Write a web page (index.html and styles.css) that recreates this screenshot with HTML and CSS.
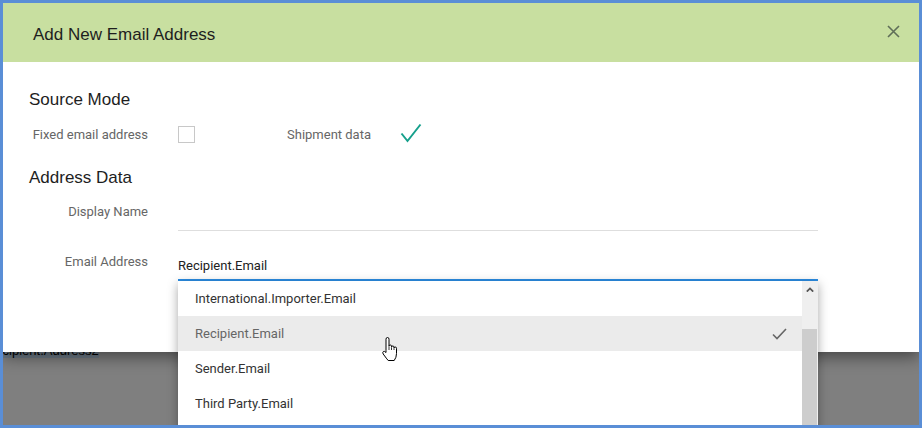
FILE: index.html
```html
<!DOCTYPE html>
<html>
<head>
<meta charset="utf-8">
<link rel="stylesheet" href="styles.css">
</head>
<body>
<div class="frame">
  <div class="page">
    <div class="page-line"><span class="sel">Recipient.Address2</span></div>
  </div>
  <div class="dialog">
    <div class="dialog-header">
      <h1 class="title">Add New Email Address</h1>
      <span class="close"><svg width="13" height="13" viewBox="0 0 13 13"><path d="M1 1L12 12M12 1L1 12" stroke="#5f6e58" stroke-width="1.6" fill="none"/></svg></span>
    </div>
    <div class="dialog-body">
      <h2 class="section">Source Mode</h2>
      <div class="mode-row">
        <span class="label">Fixed email address</span>
        <span class="checkbox"></span>
        <span class="label label-second">Shipment data</span>
        <svg class="teal-check" width="22" height="20" viewBox="0 0 22 20"><path d="M1.5 10.5L7.5 18L20.5 1.5" stroke="#16a08c" stroke-width="2" fill="none"/></svg>
      </div>
      <h2 class="section section-second">Address Data</h2>
      <div class="field-row">
        <span class="field-label">Display Name</span>
        <div class="field"></div>
      </div>
      <div class="field-row field-row-email">
        <span class="field-label">Email Address</span>
        <div class="field focused">Recipient.Email
          <div class="dropdown">
            <div class="dd-list">
              <div class="dd-item">International.Importer.Email</div>
              <div class="dd-item active">Recipient.Email<svg width="15" height="12" viewBox="0 0 15 12"><path d="M1 6.5L5 10.5L14 1" stroke="#666" stroke-width="1.6" fill="none"/></svg></div>
              <div class="dd-item">Sender.Email</div>
              <div class="dd-item">Third Party.Email</div>
            </div>
            <div class="dd-scroll">
              <div class="sb-up"><svg width="8" height="5" viewBox="0 0 8 5"><path d="M0.8 4.6L4 1.4L7.2 4.6" stroke="#555" stroke-width="1.8" fill="none"/></svg></div>
              <div class="sb-thumb"></div>
            </div>
          </div>
        </div>
      </div>
    </div>
  </div>
  <svg class="cursor" width="20" height="27" viewBox="0 0 20 27"><path d="M6 14.5V3.2Q6 1.5 7.5 1.5Q9 1.5 9 3.2V10.2Q9 9 10.3 9Q11.5 9 11.5 10.2V11.2Q11.5 10 12.8 10Q14 10 14 11.2V12.2Q14 11 15.2 11Q16.5 11 16.5 12.3V17.5Q16.5 21.5 14.2 24.5H8.2Q6.8 23 3.2 18Q2.2 16.4 3.3 15.6Q4.5 14.8 6 16.5Z" fill="#fff" stroke="#000" stroke-width="1" stroke-linejoin="round"/><path d="M9 10.5V14M11.5 11.5V14M14 12.5V14" stroke="#000" stroke-width="0.8"/></svg>
</div>
</body>
</html>
```

FILE: styles.css
```css
body {
  margin: 0;
}

.frame {
  width: 922px;
  height: 428px;
  box-sizing: border-box;
  border: 3px solid #5a8ed6;
  background: #7f7f7f;
  position: relative;
  overflow: hidden;
}

.page {
  padding-top: 340px;
}

.page-line {
  margin-left: -17px;
  font: 13px/16px "Liberation Sans", Arial, sans-serif;
  color: #000;
}

.sel {
  background: #6d7a86;
}

.dialog {
  position: absolute;
  top: 0;
  left: 0;
  width: 916px;
  height: 349px;
  background: #fff;
  box-shadow: 0 5px 15px rgba(0, 0, 0, 0.45);
}

.dialog-header {
  height: 59px;
  box-sizing: border-box;
  background: #c8dfa0;
  display: flex;
  align-items: flex-start;
  padding-left: 30px;
}

.title {
  margin: 0;
  padding-top: 22px;
  font: normal 17px/20px "Liberation Sans", Arial, sans-serif;
  color: #1e1e1e;
}

.close {
  margin-left: auto;
  margin-top: 22px;
  margin-right: 19px;
}

.close svg {
  display: block;
}

.dialog-body {
  padding: 28px 0 0 26px;
}

.section {
  margin: 0;
  font: normal 17px/20px "Liberation Sans", Arial, sans-serif;
  color: #1e1e1e;
}

.section-second {
  margin-top: 25px;
}

.mode-row {
  display: flex;
  align-items: center;
  height: 17px;
  margin-top: 16px;
}

.label {
  width: 119px;
  flex: none;
  white-space: nowrap;
  text-align: right;
  font: 13px/17px Roboto, sans-serif;
  color: #666;
}

.checkbox {
  width: 17px;
  height: 17px;
  flex: none;
  box-sizing: border-box;
  border: 1px solid #c8c8c8;
  margin-left: 30px;
}

.label-second {
  width: 84px;
  text-align: left;
  margin-left: 92px;
}

.teal-check {
  flex: none;
  margin-left: 29px;
  margin-top: -4px;
}

.field-row {
  display: grid;
  grid-template-columns: 119px 640px;
  column-gap: 30px;
  margin-top: 10px;
}

.field-row-email {
  margin-top: 17px;
}

.field-label {
  text-align: right;
  white-space: nowrap;
  padding-top: 6px;
  font: 13px/16px Roboto, sans-serif;
  color: #666;
}

.field {
  height: 33px;
  box-sizing: border-box;
  border-bottom: 1px solid #dedede;
}

.field.focused {
  position: relative;
  border-bottom: 2px solid #2b8de3;
  padding-top: 10px;
  font: 13px/16px Roboto, sans-serif;
  color: #222;
}

.dropdown {
  position: absolute;
  top: calc(100% + 2px);
  left: 0;
  width: 640px;
  height: 150px;
  background: #fff;
  display: flex;
  box-shadow: 0 3px 10px rgba(0, 0, 0, 0.35);
  z-index: 2;
}

.dd-list {
  flex: 1;
}

.dd-item {
  height: 35px;
  padding: 0 15px 0 17px;
  display: flex;
  align-items: center;
  justify-content: space-between;
  font: 13px/35px Roboto, sans-serif;
  color: #333;
}

.dd-item.active {
  background: #ebebeb;
  color: #666;
}

.dd-scroll {
  width: 16px;
  background: #efefef;
  display: flex;
  flex-direction: column;
}

.sb-up {
  height: 48px;
  box-sizing: border-box;
  padding: 6px 0 0 4px;
}

.sb-up svg {
  display: block;
}

.sb-thumb {
  flex: 1;
  background: #cdcdcd;
  margin-right: 1px;
}

.cursor {
  position: absolute;
  left: 377px;
  top: 333px;
  z-index: 3;
}
```
